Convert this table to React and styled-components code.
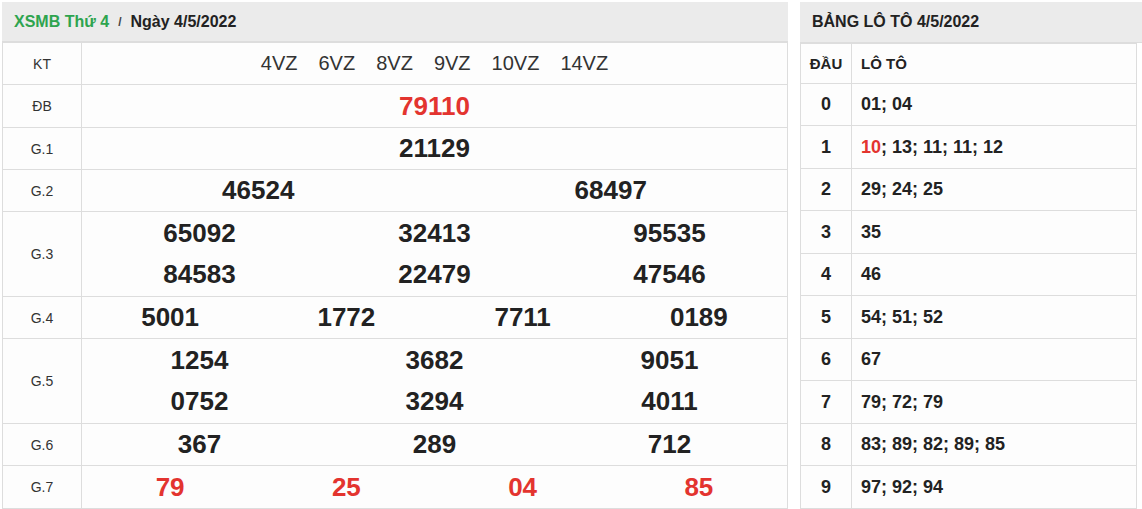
import React from "react";
import styled, { createGlobalStyle } from "styled-components";

const GlobalStyle = createGlobalStyle`
  body {
    margin: 0;
    background: #fff;
    font-family: "Liberation Sans", Arial, sans-serif;
    color: #222;
  }
`;

const Page = styled.div`
  display: flex;
  gap: 12px;
  padding: 2px 0 0 2px;
  width: 1140px;
  height: 507px;
  overflow: hidden;
`;

const Panel = styled.div`
  width: ${(p) => p.$width}px;
  flex: none;
  display: flex;
  flex-direction: column;
`;

const PanelHeader = styled.div`
  height: 43px;
  background: #ebebeb;
  display: flex;
  align-items: center;
  padding-left: 12px;
  font-size: 16px;
  font-weight: bold;
  color: #222;
  border-bottom: 1px solid #dddddd;
  box-sizing: border-box;
`;

const GreenTitle = styled.span`
  color: #2ea44f;
`;

const Slash = styled.span`
  font-size: 12px;
  color: #444;
  margin: 0 9px 0 9px;
`;

const Table = styled.table`
  border-collapse: collapse;
  width: ${(p) => p.$width || "100%"};
  table-layout: fixed;
  background: #fdfdfd;
`;

const Row = styled.tr`
  height: ${(p) => p.$h}px;
`;

const LabelCell = styled.td`
  width: 78px;
  border: 1px solid #dddddd;
  text-align: center;
  font-size: 14px;
  color: #333;
  padding: 0;
`;

const PrizeCell = styled.td`
  border: 1px solid #dddddd;
  padding: 0;
  text-align: center;
`;

const CodeList = styled.div`
  display: flex;
  justify-content: center;
  gap: 21px;
  font-size: 20px;
  color: #333;
`;

const NumberGrid = styled.div`
  display: grid;
  grid-template-columns: repeat(${(p) => p.$cols}, 1fr);
`;

const Num = styled.span`
  font-size: 26px;
  font-weight: bold;
  line-height: 41px;
  color: ${(p) => (p.$red ? "#e3342f" : "#222")};
`;

const HeadCell = styled.td`
  border: 1px solid #dddddd;
  font-size: 15px;
  font-weight: bold;
  color: #222;
  padding: 0 0 0 ${(p) => (p.$left ? 9 : 0)}px;
  text-align: ${(p) => (p.$left ? "left" : "center")};
  width: ${(p) => (p.$w ? `${p.$w}px` : "auto")};
`;

const LotoCell = styled.td`
  border: 1px solid #dddddd;
  font-size: 18px;
  font-weight: bold;
  color: #222;
  padding: 0 0 0 ${(p) => (p.$left ? 9 : 0)}px;
  text-align: ${(p) => (p.$left ? "left" : "center")};
`;

const Red = styled.span`
  color: #e3342f;
`;

const prizes = [
  { label: "ĐB", cols: 1, h: 43, nums: ["79110"], red: true },
  { label: "G.1", cols: 1, h: 42, nums: ["21129"] },
  { label: "G.2", cols: 2, h: 42, nums: ["46524", "68497"] },
  { label: "G.3", cols: 3, h: 85, nums: ["65092", "32413", "95535", "84583", "22479", "47546"] },
  { label: "G.4", cols: 4, h: 42, nums: ["5001", "1772", "7711", "0189"] },
  { label: "G.5", cols: 3, h: 85, nums: ["1254", "3682", "9051", "0752", "3294", "4011"] },
  { label: "G.6", cols: 3, h: 42, nums: ["367", "289", "712"] },
  { label: "G.7", cols: 4, h: 43, nums: ["79", "25", "04", "85"], red: true },
];

const codes = ["4VZ", "6VZ", "8VZ", "9VZ", "10VZ", "14VZ"];

const loto = [
  ["0", "01; 04"],
  ["1", null],
  ["2", "29; 24; 25"],
  ["3", "35"],
  ["4", "46"],
  ["5", "54; 51; 52"],
  ["6", "67"],
  ["7", "79; 72; 79"],
  ["8", "83; 89; 82; 89; 85"],
  ["9", "97; 92; 94"],
];

export default function App() {
  return (
    <>
      <GlobalStyle />
      <Page>
        <Panel $width={786}>
          <PanelHeader>
            <GreenTitle>XSMB Thứ 4</GreenTitle>
            <Slash>/</Slash>
            Ngày 4/5/2022
          </PanelHeader>
          <Table>
            <tbody>
              <Row $h={42}>
                <LabelCell>KT</LabelCell>
                <PrizeCell>
                  <CodeList>
                    {codes.map((c) => (
                      <span key={c}>{c}</span>
                    ))}
                  </CodeList>
                </PrizeCell>
              </Row>
              {prizes.map((p) => (
                <Row $h={p.h} key={p.label}>
                  <LabelCell>{p.label}</LabelCell>
                  <PrizeCell>
                    <NumberGrid $cols={p.cols}>
                      {p.nums.map((n, i) => (
                        <Num key={i} $red={p.red}>
                          {n}
                        </Num>
                      ))}
                    </NumberGrid>
                  </PrizeCell>
                </Row>
              ))}
            </tbody>
          </Table>
        </Panel>

        <Panel $width={342}>
          <PanelHeader>BẢNG LÔ TÔ 4/5/2022</PanelHeader>
          <Table $width="337px">
            <tbody>
              <Row $h={40}>
                <HeadCell $w={50}>ĐẦU</HeadCell>
                <HeadCell $left>LÔ TÔ</HeadCell>
              </Row>
              {loto.map(([head, list], i) => (
                <Row $h={i % 2 ? 43 : 42} key={head}>
                  <LotoCell>{head}</LotoCell>
                  <LotoCell $left>
                    {list === null ? (
                      <>
                        <Red>10</Red>; 13; 11; 11; 12
                      </>
                    ) : (
                      list
                    )}
                  </LotoCell>
                </Row>
              ))}
            </tbody>
          </Table>
        </Panel>
      </Page>
    </>
  );
}
